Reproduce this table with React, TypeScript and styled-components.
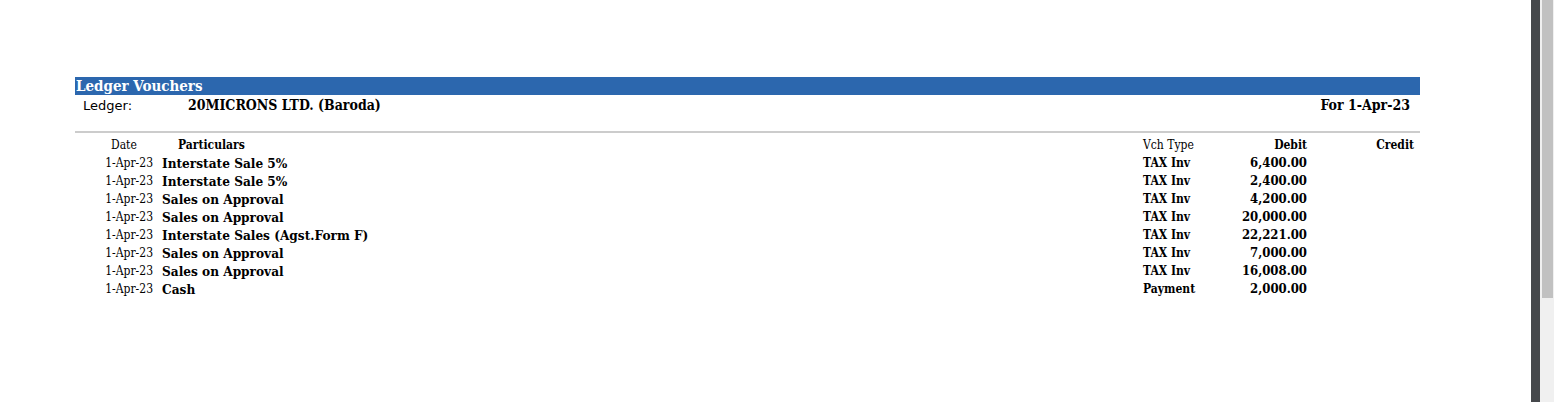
import React from 'react';
import styled, { createGlobalStyle } from 'styled-components';

const GlobalStyle = createGlobalStyle`
  *, *::before, *::after {
    box-sizing: border-box;
  }
  html, body {
    margin: 0;
    padding: 0;
    background: #ffffff;
    overflow: hidden;
  }
  body {
    font-family: "DejaVu Serif Condensed", "DejaVu Serif", serif;
    font-stretch: condensed;
    color: #000000;
  }
`;

type Voucher = {
  date: string;
  particulars: string;
  vchType: string;
  debit: string;
  credit: string;
};

const vouchers: Voucher[] = [
  { date: '1-Apr-23', particulars: 'Interstate Sale 5%', vchType: 'TAX Inv', debit: '6,400.00', credit: '' },
  { date: '1-Apr-23', particulars: 'Interstate Sale 5%', vchType: 'TAX Inv', debit: '2,400.00', credit: '' },
  { date: '1-Apr-23', particulars: 'Sales on Approval', vchType: 'TAX Inv', debit: '4,200.00', credit: '' },
  { date: '1-Apr-23', particulars: 'Sales on Approval', vchType: 'TAX Inv', debit: '20,000.00', credit: '' },
  { date: '1-Apr-23', particulars: 'Interstate Sales (Agst.Form F)', vchType: 'TAX Inv', debit: '22,221.00', credit: '' },
  { date: '1-Apr-23', particulars: 'Sales on Approval', vchType: 'TAX Inv', debit: '7,000.00', credit: '' },
  { date: '1-Apr-23', particulars: 'Sales on Approval', vchType: 'TAX Inv', debit: '16,008.00', credit: '' },
  { date: '1-Apr-23', particulars: 'Cash', vchType: 'Payment', debit: '2,000.00', credit: '' },
];

const Screen = styled.div`
  display: flex;
  width: 1554px;
  height: 402px;
`;

const Page = styled.div`
  flex: 1;
  padding: 77px 0 0 75px;
`;

const Report = styled.div`
  width: 1345px;
`;

const TitleBar = styled.div`
  background: #2c67ae;
  color: #ffffff;
  height: 18px;
  line-height: 19px;
  font-size: 15px;
  font-weight: bold;
  padding-left: 1px;
`;

const LedgerRow = styled.div`
  display: flex;
  align-items: center;
  height: 19px;
  padding: 1px 10px 0 8px;
  font-size: 14px;
`;

const LedgerLabel = styled.span`
  font-family: "DejaVu Sans", sans-serif;
  font-stretch: normal;
  font-size: 13px;
  width: 105px;
`;

const LedgerName = styled.span`
  font-weight: bold;
  flex: 1;
`;

const Period = styled.span`
  font-weight: bold;
`;

const Divider = styled.hr`
  margin: 17px 0 3px;
  border: 0;
  height: 2px;
  background: #cccccc;
`;

const Grid = styled.div`
  display: grid;
  grid-template-columns: 82px 986px 67px 97px 107px;
  padding-right: 6px;
  grid-auto-rows: 18px;
  align-items: center;
`;

const Cell = styled.div<{ $align?: 'left' | 'right'; $bold?: boolean; $size?: number; $pad?: string }>`
  text-align: ${(p) => p.$align ?? 'left'};
  font-weight: ${(p) => (p.$bold ? 'bold' : 'normal')};
  font-size: ${(p) => p.$size ?? 12}px;
  padding: ${(p) => p.$pad ?? '0'};
  line-height: 18px;
  white-space: nowrap;
`;

const Gutter = styled.div`
  width: 9px;
  background: #45484b;
`;

const ScrollTrack = styled.div`
  width: 14px;
  background: #f0f0f0;
  padding: 0 1px 0 2px;
`;

const ScrollThumb = styled.div`
  height: 298px;
  background: #c1c1c1;
`;

export default function App() {
  return (
    <Screen>
      <GlobalStyle />
      <Page>
        <Report>
          <TitleBar>Ledger Vouchers</TitleBar>
          <LedgerRow>
            <LedgerLabel>Ledger:</LedgerLabel>
            <LedgerName>20MICRONS LTD. (Baroda)</LedgerName>
            <Period>For 1-Apr-23</Period>
          </LedgerRow>
          <Divider />
          <Grid>
            <Cell $pad="0 0 0 36px">Date</Cell>
            <Cell $bold $pad="0 0 0 21px">Particulars</Cell>
            <Cell>Vch Type</Cell>
            <Cell $align="right" $bold>Debit</Cell>
            <Cell $align="right" $bold>Credit</Cell>
            {vouchers.map((v, i) => (
              <React.Fragment key={i}>
                <Cell $align="right" $pad="0 4px 0 0">{v.date}</Cell>
                <Cell $bold $size={13.5} $pad="0 0 0 5px">{v.particulars}</Cell>
                <Cell $bold>{v.vchType}</Cell>
                <Cell $align="right" $bold $size={13}>{v.debit}</Cell>
                <Cell $align="right" $bold $size={13}>{v.credit}</Cell>
              </React.Fragment>
            ))}
          </Grid>
        </Report>
      </Page>
      <Gutter />
      <ScrollTrack>
        <ScrollThumb />
      </ScrollTrack>
    </Screen>
  );
}
